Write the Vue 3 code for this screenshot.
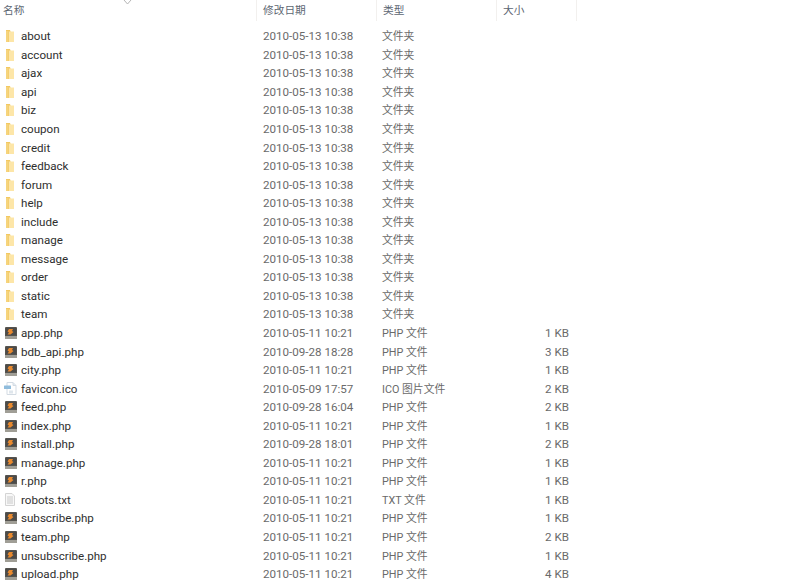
<script setup>
const folderNames = ['about', 'account', 'ajax', 'api', 'biz', 'coupon', 'credit', 'feedback', 'forum', 'help', 'include', 'manage', 'message', 'order', 'static', 'team'];

const folders = folderNames.map(name => ({
  name,
  date: '2010-05-13 10:38',
  type: '文件夹',
  size: '',
  icon: 'folder',
}));

const files = [
  { name: 'app.php', date: '2010-05-11 10:21', type: 'PHP 文件', size: '1 KB', icon: 'php' },
  { name: 'bdb_api.php', date: '2010-09-28 18:28', type: 'PHP 文件', size: '3 KB', icon: 'php' },
  { name: 'city.php', date: '2010-05-11 10:21', type: 'PHP 文件', size: '1 KB', icon: 'php' },
  { name: 'favicon.ico', date: '2010-05-09 17:57', type: 'ICO 图片文件', size: '2 KB', icon: 'ico' },
  { name: 'feed.php', date: '2010-09-28 16:04', type: 'PHP 文件', size: '2 KB', icon: 'php' },
  { name: 'index.php', date: '2010-05-11 10:21', type: 'PHP 文件', size: '1 KB', icon: 'php' },
  { name: 'install.php', date: '2010-09-28 18:01', type: 'PHP 文件', size: '2 KB', icon: 'php' },
  { name: 'manage.php', date: '2010-05-11 10:21', type: 'PHP 文件', size: '1 KB', icon: 'php' },
  { name: 'r.php', date: '2010-05-11 10:21', type: 'PHP 文件', size: '1 KB', icon: 'php' },
  { name: 'robots.txt', date: '2010-05-11 10:21', type: 'TXT 文件', size: '1 KB', icon: 'txt' },
  { name: 'subscribe.php', date: '2010-05-11 10:21', type: 'PHP 文件', size: '1 KB', icon: 'php' },
  { name: 'team.php', date: '2010-05-11 10:21', type: 'PHP 文件', size: '2 KB', icon: 'php' },
  { name: 'unsubscribe.php', date: '2010-05-11 10:21', type: 'PHP 文件', size: '1 KB', icon: 'php' },
  { name: 'upload.php', date: '2010-05-11 10:21', type: 'PHP 文件', size: '4 KB', icon: 'php' },
];

const rows = [...folders, ...files];
</script>

<template>
  <main class="explorer">
    <svg class="sort-arrow" width="9" height="5" viewBox="0 0 9 5">
      <path d="M1 0 L4.5 4 L8 0" fill="none" stroke="#b5b5b5" stroke-width="1" />
    </svg>
    <header class="head">
      <div class="head-cell name-col">名称</div>
      <div class="head-cell date-col">修改日期</div>
      <div class="head-cell type-col">类型</div>
      <div class="head-cell size-col">大小</div>
    </header>
    <div class="list">
      <div v-for="row in rows" :key="row.name + row.type" class="row">
        <div class="name">
          <svg v-if="row.icon === 'folder'" class="icon" width="16" height="16" viewBox="0 0 16 16">
            <path d="M4 2 H8 L8.5 3.5 V14 H4 Z" fill="#f2c862" />
            <path d="M7 3.5 H12 V14 H7 Z" fill="#fde6a8" />
            <path d="M4 3 H6.5 V14 H4 Z" fill="#f6d47c" />
          </svg>
          <svg v-else-if="row.icon === 'php'" class="icon" width="16" height="16" viewBox="0 0 16 16">
            <rect x="3" y="2" width="12" height="12" rx="1" fill="#55534f" />
            <rect x="4" y="3" width="10" height="7" fill="#4c4b49" />
            <path d="M7 4 H11 L10 6 L11.5 7 L8.5 9.5 H5.5 L7 7.5 L5.5 6.5 Z" fill="#e8892e" />
            <rect x="3" y="11" width="12" height="3" fill="#a09e96" />
          </svg>
          <svg v-else-if="row.icon === 'ico'" class="icon" width="16" height="16" viewBox="0 0 16 16">
            <path d="M5 1.5 H11 L14 4.5 V13.5 H5 Z" fill="#fff" stroke="#d3dbe3" />
            <path d="M11 1.5 V4.5 H14" fill="#e3eaf0" stroke="#d3dbe3" />
            <rect x="2" y="4.5" width="7" height="3.5" rx="0.5" fill="#8fbcdc" />
            <rect x="7" y="9.5" width="4" height="3" fill="#dfe6ec" />
          </svg>
          <svg v-else class="icon" width="16" height="16" viewBox="0 0 16 16">
            <path d="M3.5 1.5 H10 L12.5 4 V13.5 H3.5 Z" fill="#f8f8f8" stroke="#d4d4d4" />
            <path d="M5 5 H11 M5 7 H11 M5 9 H11 M5 11 H11" stroke="#cacaca" stroke-width="1" />
          </svg>
          <span class="label">{{ row.name }}</span>
        </div>
        <div class="date">{{ row.date }}</div>
        <div class="type">{{ row.type }}</div>
        <div class="size">{{ row.size }}</div>
      </div>
    </div>
  </main>
</template>

<style>
html, body {
  margin: 0;
  background: #fff;
  overflow: hidden;
}
</style>

<style scoped>
.explorer {
  position: relative;
  width: 800px;
  height: 585px;
  overflow: hidden;
  background: #fff;
  font-family: Roboto, "Noto Sans CJK SC", sans-serif;
  font-size: 11.6px;
}
.sort-arrow {
  position: absolute;
  left: 123px;
  top: 0;
}
.head {
  display: grid;
  grid-template-columns: 257px 120px 120px 80px;
  height: 21px;
}
.head-cell {
  box-sizing: border-box;
  padding-left: 3px;
  padding-top: 1px;
  line-height: 20px;
  font-size: 10.7px;
  color: #5c6672;
  border-right: 1px solid #f2f0ee;
}
.date-col, .type-col, .size-col {
  padding-left: 6px;
}
.list {
  padding-top: 6px;
}
.row {
  display: grid;
  grid-template-columns: 263px 119px 107px 80px;
  height: 18.55px;
  align-items: center;
  line-height: 18px;
  color: #6a6a6a;
}
.type {
  font-size: 10.8px;
  line-height: 16px;
  padding-top: 2px;
}
.name {
  display: flex;
  align-items: center;
  height: 16px;
  color: #2e2e2e;
}
.icon {
  flex: none;
  margin-left: 2px;
  margin-right: 3px;
}
.size {
  text-align: right;
}
</style>
